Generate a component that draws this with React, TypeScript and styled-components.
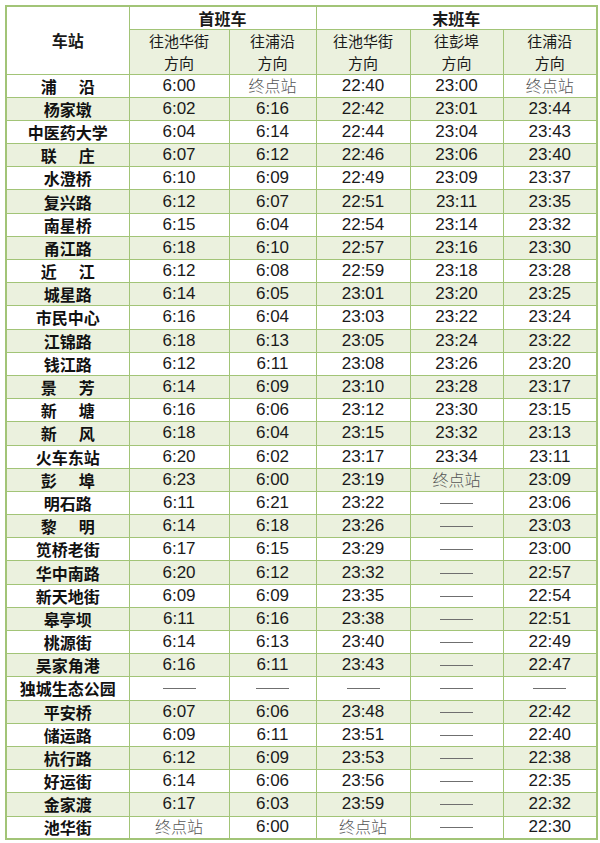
import * as React from 'react';
import styled, {createGlobalStyle} from 'styled-components';

type Cell = string;
type Row = [string, Cell, Cell, Cell, Cell, Cell];

const END = '终点站';
const NONE = '——';

const ROWS: Row[] = [
    ['浦沿', '6:00', END, '22:40', '23:00', END],
    ['杨家墩', '6:02', '6:16', '22:42', '23:01', '23:44'],
    ['中医药大学', '6:04', '6:14', '22:44', '23:04', '23:43'],
    ['联庄', '6:07', '6:12', '22:46', '23:06', '23:40'],
    ['水澄桥', '6:10', '6:09', '22:49', '23:09', '23:37'],
    ['复兴路', '6:12', '6:07', '22:51', '23:11', '23:35'],
    ['南星桥', '6:15', '6:04', '22:54', '23:14', '23:32'],
    ['甬江路', '6:18', '6:10', '22:57', '23:16', '23:30'],
    ['近江', '6:12', '6:08', '22:59', '23:18', '23:28'],
    ['城星路', '6:14', '6:05', '23:01', '23:20', '23:25'],
    ['市民中心', '6:16', '6:04', '23:03', '23:22', '23:24'],
    ['江锦路', '6:18', '6:13', '23:05', '23:24', '23:22'],
    ['钱江路', '6:12', '6:11', '23:08', '23:26', '23:20'],
    ['景芳', '6:14', '6:09', '23:10', '23:28', '23:17'],
    ['新塘', '6:16', '6:06', '23:12', '23:30', '23:15'],
    ['新风', '6:18', '6:04', '23:15', '23:32', '23:13'],
    ['火车东站', '6:20', '6:02', '23:17', '23:34', '23:11'],
    ['彭埠', '6:23', '6:00', '23:19', END, '23:09'],
    ['明石路', '6:11', '6:21', '23:22', NONE, '23:06'],
    ['黎明', '6:14', '6:18', '23:26', NONE, '23:03'],
    ['笕桥老街', '6:17', '6:15', '23:29', NONE, '23:00'],
    ['华中南路', '6:20', '6:12', '23:32', NONE, '22:57'],
    ['新天地街', '6:09', '6:09', '23:35', NONE, '22:54'],
    ['皋亭坝', '6:11', '6:16', '23:38', NONE, '22:51'],
    ['桃源街', '6:14', '6:13', '23:40', NONE, '22:49'],
    ['吴家角港', '6:16', '6:11', '23:43', NONE, '22:47'],
    ['独城生态公园', NONE, NONE, NONE, NONE, NONE],
    ['平安桥', '6:07', '6:06', '23:48', NONE, '22:42'],
    ['储运路', '6:09', '6:11', '23:51', NONE, '22:40'],
    ['杭行路', '6:12', '6:09', '23:53', NONE, '22:38'],
    ['好运街', '6:14', '6:06', '23:56', NONE, '22:35'],
    ['金家渡', '6:17', '6:03', '23:59', NONE, '22:32'],
    ['池华街', END, '6:00', END, NONE, '22:30']
];

const COL_WIDTHS = [123, 100, 87, 94, 93, 94];
const DIRECTIONS = ['往池华街', '往浦沿', '往池华街', '往彭埠', '往浦沿'];

const GREEN_LINE = '#a2c477';
const GREEN_FILL = '#ebf1de';

export default function App() {
    return (
        <Page>
            <GlobalStyle />
            <Table>
                <colgroup>
                    {COL_WIDTHS.map((w, i) => (
                        <col key={i} style={{width: w}} />
                    ))}
                </colgroup>
                <thead>
                    <TopHeadRow>
                        <HeadCell rowSpan={2}>车站</HeadCell>
                        <HeadCell colSpan={2}>首班车</HeadCell>
                        <HeadCell colSpan={3}>末班车</HeadCell>
                    </TopHeadRow>
                    <SubHeadRow>
                        {DIRECTIONS.map((d, i) => (
                            <SubHeadCell key={i}>
                                <HeadLine>{d}</HeadLine>
                                <HeadLine>方向</HeadLine>
                            </SubHeadCell>
                        ))}
                    </SubHeadRow>
                </thead>
                <tbody>
                    {ROWS.map(([station, ...times], i) => (
                        <DataRow key={station} $shaded={i % 2 === 1}>
                            <StationCell>
                                {station.length === 2 ? (
                                    <Spread>
                                        <span>{station[0]}</span>
                                        <span>{station[1]}</span>
                                    </Spread>
                                ) : (
                                    station
                                )}
                            </StationCell>
                            {times.map((t, j) => (
                                <TimeCell key={j}>
                                    {t === END ? (
                                        <Terminal>{t}</Terminal>
                                    ) : t === NONE ? (
                                        <Dash />
                                    ) : (
                                        t
                                    )}
                                </TimeCell>
                            ))}
                        </DataRow>
                    ))}
                </tbody>
            </Table>
        </Page>
    );
}

const GlobalStyle = createGlobalStyle`
    html, body {
        margin: 0;
        padding: 0;
        background: #ffffff;
    }
    body {
        font-family: "Liberation Sans", "Noto Sans CJK SC", sans-serif;
        color: #1a1a1a;
    }
`;

const Page = styled.div`
    width: 600px;
    padding: 5px 4px 0 5px;
    box-sizing: border-box;
`;

const Table = styled.table`
    width: 591px;
    border-collapse: collapse;
    table-layout: fixed;
    border: 2px solid ${GREEN_LINE};

    td,
    th {
        border: 1.5px solid ${GREEN_LINE};
        padding: 0;
        text-align: center;
        vertical-align: middle;
    }
`;

const TopHeadRow = styled.tr`
    height: 23px;
    background: #ffffff;
`;

const HeadCell = styled.th`
    font-family: "Noto Sans CJK SC", sans-serif;
    font-size: 16px;
    font-weight: 700;
    line-height: 18px;
    background: #ffffff;
    color: #1a1a1a;
`;

const SubHeadRow = styled.tr`
    height: 45px;
`;

const SubHeadCell = styled.th`
    font-family: "Noto Sans CJK SC", sans-serif;
    font-weight: 400;
    background: ${GREEN_FILL};
    color: #1a1a1a;
`;

const HeadLine = styled.div`
    font-size: 15px;
    line-height: 22px;
    height: 22px;
`;

const DataRow = styled.tr<{$shaded: boolean}>`
    height: 23.2px;
    background: ${p => (p.$shaded ? GREEN_FILL : '#ffffff')};
`;

const StationCell = styled.td`
    font-family: "Noto Sans CJK SC", sans-serif;
    font-size: 16px;
    font-weight: 700;
    line-height: 18px;
    color: #111111;
`;

const Spread = styled.span`
    display: inline-flex;
    gap: 22px;
`;

const TimeCell = styled.td`
    font-family: "Liberation Sans", Arial, sans-serif;
    font-size: 17px;
    line-height: 18px;
    color: #1a1a1a;
`;

const Terminal = styled.span`
    font-family: "Noto Sans CJK SC", serif;
    font-weight: 300;
    font-size: 16px;
    line-height: 18px;
    color: #555555;
`;

const Dash = styled.span`
    display: inline-block;
    width: 33px;
    height: 0;
    border-top: 1px solid #6f6f6f;
    vertical-align: middle;
`;
